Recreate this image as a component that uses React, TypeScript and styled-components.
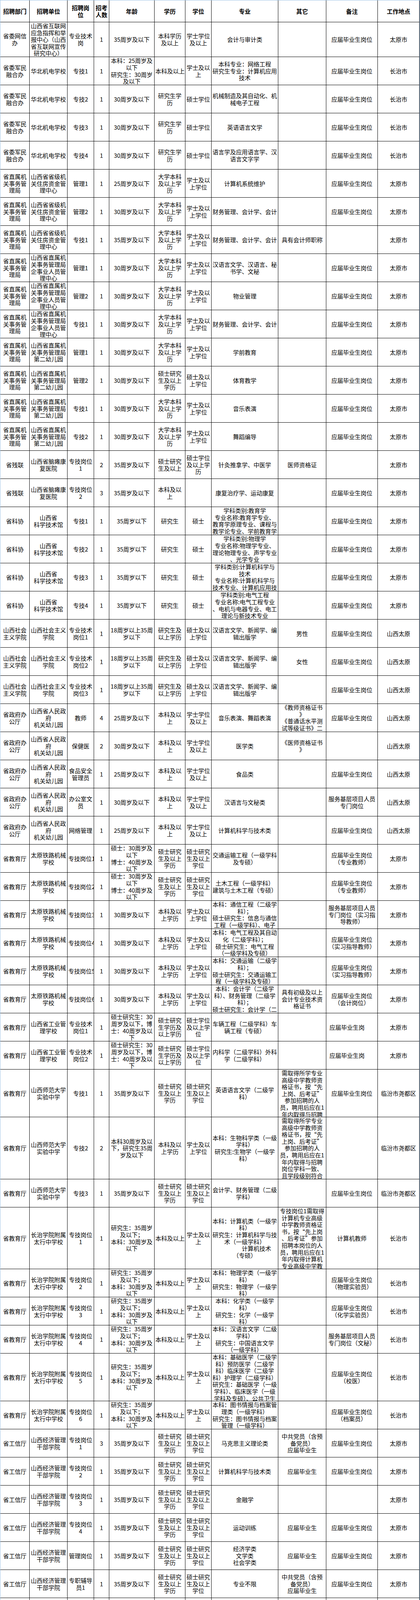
import React from 'react';
import styled, { createGlobalStyle } from 'styled-components';

const GlobalStyle = createGlobalStyle`
  html, body {
    margin: 0;
    padding: 0;
    background: #ffffff;
  }
  body {
    font-family: "Noto Sans CJK SC", sans-serif;
    color: #000000;
  }
`;

const columns = [75, 97, 68, 39, 116, 79, 67, 171, 123, 132, 107];

const Sheet = styled.div`
  width: 1076px;
  box-sizing: border-box;
  border-left: 1px solid #9dc3e6;
  border-right: 1px solid #9dc3e6;
  border-top: 1px solid #9dc3e6;
`;

const Row = styled.div<{ $height: number }>`
  display: flex;
  height: ${(p) => p.$height}px;
  overflow: hidden;
`;

const Cell = styled.div<{ $width: number; $bold?: boolean; $align?: 'left' | 'center' }>`
  flex: 0 0 ${(p) => p.$width}px;
  width: ${(p) => p.$width}px;
  height: 100%;
  display: flex;
  flex-direction: column;
  box-sizing: border-box;
  overflow: hidden;
  padding: 0 2px 0 ${(p) => (p.$align === 'left' ? '8px' : '2px')};
  border-right: 1px solid #000000;
  border-bottom: 1px solid #000000;
  font-size: 15px;
  line-height: 17.6px;
  font-weight: ${(p) => (p.$bold ? 700 : 400)};
  text-align: ${(p) => p.$align || 'center'};
`;

const CellText = styled.div`
  flex: none;
  margin: auto 0;
  white-space: pre;
`;

type CellData = string | { text: string; align: 'left' | 'center' };
type RowData = { h: number; cells: CellData[] };

const r = (h: number, ...cells: CellData[]): RowData => ({ h, cells });

const YJ = '应届毕业生岗位';
const SWJM = '省委军民\n融合办';
const HB = '华北机电学校';
const ZSJ = '省直属机\n关事务管\n理局';
const ZF = '山西省省级机\n关住房资金管\n理中心';
const QSY = '山西省直属机\n关事务管理局\n企事业人员管\n理中心';
const YEY = '山西省直属机\n关事务管理局\n第二幼儿园';
const DXBK = '大学本科\n及以上学\n历';
const XSJS = '学士及以\n上学位';
const KXG = '山西省\n科学技术馆';
const SHZY = '山西社会\n主义学院';
const SHZYY = '山西社会主义\n学院';
const ZFB = '省政府办\n公厅';
const JGY = '山西省人民政\n府\n机关幼儿园';
const BKYS = '本科及以\n上';
const XSXW = '学士学位\n及以上';
const JYT = '省教育厅';
const TL = '太原铁路机械\n学校';
const SSYS = '硕士研究\n生及以上\n学历';
const SSXW = '硕士研究\n生及以上\n学位';
const SSNL = '硕士：30周岁及\n以下\n博士：40周岁及\n以下';
const BKXL = '本科及以\n上学历';
const SXJY = '山西师范大学\n实验中学';
const SXJYNOTE =
  '需取得所学专业\n高级中学教师资\n格证书，按“先\n上岗、后考证”\n参加招聘的人\n员，聘用后应在1\n年内取得与招聘\n岗位学科一致、\n且学段级别符合\n的教师资格证书';
const CZ = '长治学院附属\n太行中学校';
const CZNL = '研究生：35周岁\n及以下；\n本科：30周岁及\n以下';
const GXT = '省工信厅';
const JJGL = '山西经济管理\n干部学院';
const GYXX = '山西省工业与\n信息技术学校';
const DY = '中共党员（含预\n备党员）';

const header = r(
  56,
  '招聘部门',
  '招聘单位',
  '招聘岗\n位',
  '招考\n人数',
  '年龄',
  '学历',
  '学位',
  '专业',
  '其它',
  '备注',
  '工作地点'
);

const rows: RowData[] = [
  r(89, '省委网信\n办', '山西省互联网\n应急指挥和举\n报中心（山西\n省互联网宣传\n研究中心）', '专业技术\n岗', '1', '35周岁及以下', '本科学历\n及以上', '学士学位\n及以上', '会计与审计类', '', YJ, '太原市'),
  r(72, SWJM, HB, '专技1', '1', '本科：25周岁及\n以下\n研究生：30周岁\n及以下', '本科及以上', '学士及以\n上', '本科专业：网络工程\n研究生专业：计算机应用\n技术', '', YJ, '长治市'),
  r(72, SWJM, HB, '专技2', '1', '30周岁及以下', '研究生学\n历', '硕士学位', '机械制造及其自动化、机\n械电子工程', '', YJ, '长治市'),
  r(72, SWJM, HB, '专技3', '1', '30周岁及以下', '研究生学\n历', '硕士学位', '英语语言文学', '', YJ, '长治市'),
  r(72, SWJM, HB, '专技4', '1', '30周岁及以下', '研究生学\n历', '硕士学位', '语言学及应用语言学、汉\n语言文字学', '', YJ, '长治市'),
  r(72, ZSJ, ZF, '管理1', '1', '25周岁及以下', DXBK, XSJS, '计算机系统维护', '', YJ, '太原市'),
  r(72, ZSJ, ZF, '管理2', '1', '30周岁及以下', DXBK, XSJS, '财务管理、会计学、会计', '', YJ, '太原市'),
  r(72, ZSJ, ZF, '专技1', '1', '35周岁及以下', DXBK, XSJS, '财务管理、会计学、会计', '具有会计师职称', '', '太原市'),
  r(72, ZSJ, QSY, '管理1', '1', '30周岁及以下', DXBK, XSJS, '汉语言文学、汉语言、秘\n书学、文秘', '', YJ, '太原市'),
  r(72, ZSJ, QSY, '管理2', '1', '30周岁及以下', DXBK, XSJS, '物业管理', '', YJ, '太原市'),
  r(72, ZSJ, QSY, '专技1', '1', '30周岁及以下', DXBK, XSJS, '财务管理、会计学、会计', '', YJ, '太原市'),
  r(72, ZSJ, YEY, '管理1', '1', '30周岁及以下', DXBK, XSJS, '学前教育', '', YJ, '太原市'),
  r(72, ZSJ, YEY, '管理2', '1', '30周岁及以下', '硕士研究\n生及以上\n学历', '硕士及以\n上学位', '体育教学', '', YJ, '太原市'),
  r(72, ZSJ, YEY, '专技1', '1', '30周岁及以下', DXBK, XSJS, '音乐表演', '', YJ, '太原市'),
  r(72, ZSJ, YEY, '专技2', '1', '30周岁及以下', DXBK, XSJS, '舞蹈编导', '', YJ, '太原市'),
  r(72, '省残联', '山西省脑瘫康\n复医院', '专技岗位\n1', '2', '35周岁及以下', '硕士研究\n生及以上', '硕士学位\n及以上学\n历', '针灸推拿学、中医学', '医师资格证', '', '太原市'),
  r(72, '省残联', '山西省脑瘫康\n复医院', '专技岗位\n2', '3', '35周岁及以下', BKYS, '', '康复治疗学、运动康复', '', YJ, '太原市'),
  r(72, '省科协', KXG, '专技1', '1', '35周岁以下', '研究生', '硕士', '学科类别:教育学\n专业名称:教育学专业、\n教育学原理专业、课程与\n教学论专业、学前教育学\n专业', '', YJ, '太原市'),
  r(72, '省科协', KXG, '专技2', '1', '35周岁以下', '研究生', '硕士', '学科类别:物理学\n专业名称:物理学专业、\n理论物理专业、声学专业\n、光学专业', '', YJ, '太原市'),
  r(72, '省科协', KXG, '专技3', '1', '35周岁以下', '研究生', '硕士', '学科类别:计算机科学与\n技术\n专业名称:计算机科学与\n技术专业、计算机应用技\n术专业', '', YJ, '太原市'),
  r(72, '省科协', KXG, '专技4', '1', '35周岁以下', '研究生', '硕士', '学科类别:电气工程\n专业名称:电气工程专业\n、电机与电器专业、电工\n理论与新技术专业', '', YJ, '太原市'),
  r(72, SHZY, SHZYY, '专业技术\n岗位1', '1', '18周岁以上35周\n岁以下', '研究生及\n以上学历', '硕士及以\n上学位', '汉语言文学、新闻学、编\n辑出版学', '男性', YJ, '山西太原'),
  r(72, SHZY, SHZYY, '专业技术\n岗位2', '1', '18周岁以上35周\n岁以下', '研究生及\n以上学历', '硕士及以\n上学位', '汉语言文学、新闻学、编\n辑出版学', '女性', YJ, '山西太原'),
  r(72, SHZY, SHZYY, '专业技术\n岗位3', '1', '18周岁以上35周\n岁以下', '研究生及\n以上学历', '硕士及以\n上学位', '汉语言文学、新闻学、编\n辑出版学', '', YJ, '山西太原'),
  r(72, ZFB, JGY, '教师', '4', '25周岁及以下', BKYS, XSXW, '音乐表演、舞蹈表演', '《教师资格证书\n》\n《普通话水平测\n试等级证书》二\n级乙等及以上', YJ, '山西太原'),
  r(72, ZFB, JGY, '保健医', '2', '30周岁及以下', BKYS, XSXW, '医学类', '《医师资格证书\n》', '', '山西太原'),
  r(72, ZFB, JGY, '食品安全\n管理员', '1', '25周岁及以下', BKYS, XSXW, '食品类', '', YJ, '山西太原'),
  r(72, ZFB, JGY, '办公室文\n员', '1', '30周岁及以下', BKYS, XSXW, '汉语言与文秘类', '', '服务基层项目人员\n专门岗位', '山西太原'),
  r(72, ZFB, JGY, '网络管理', '1', '25周岁及以下', BKYS, XSXW, '计算机科学与技术类', '', YJ, '山西太原'),
  r(72, JYT, TL, '专技岗位1', '1', SSNL, SSYS, SSXW, '交通运输工程（一级学科\n及专硕）', '', '应届毕业生岗位\n（专业教师）', '太原市'),
  r(72, JYT, TL, '专技岗位2', '1', SSNL, SSYS, SSXW, '土木工程（一级学科）\n建筑与土木工程（专硕）', '', '应届毕业生岗位\n（专业教师）', '太原市'),
  r(72, JYT, TL, '专技岗位3', '1', '30周岁及以下', BKXL, XSJS, '本科：通信工程（二级学\n科）；\n硕士研究生：信息与通信\n工程（一级学科）、电子\n科学与技术（一级学科）', '', '服务基层项目人员\n专门岗位（实习指\n导教师）', '太原市'),
  r(72, JYT, TL, '专技岗位4', '1', '30周岁及以下', BKXL, XSJS, '本科：电气工程及其自动\n化（二级学科）；\n硕士研究生：电气工程\n（一级学科及专硕）', '', '应届毕业生岗位\n（实习指导教师）', '太原市'),
  r(72, JYT, TL, '专技岗位5', '1', '30周岁及以下', BKXL, XSJS, '本科：交通运输（二级学\n科）；\n硕士研究生：交通运输工\n程（一级学科及专硕）', '', '应届毕业生岗位\n（实习指导教师）', '太原市'),
  r(72, JYT, TL, '专技岗位6', '1', '30周岁及以下', BKXL, XSJS, '本科：会计学（二级学\n科）、财务管理（二级学\n科）；\n硕士研究生：会计学（二\n级学科）', '具有初级及以上\n会计专业技术资\n格证书', '应届毕业生岗位\n（会计岗位）', '太原市'),
  r(72, JYT, '山西省工业管\n理学校', '专业技术\n岗位1', '1', '硕士研究生：30\n周岁及以下，博\n士：40周岁及以\n下', '硕士研究\n生学历及\n以上学历', '硕士学位\n及以上学\n位', '车辆工程（二级学科）车\n辆工程（专硕）', '', { text: '应届毕业生岗', align: 'left' }, '太原市'),
  r(72, JYT, '山西省工业管\n理学校', '专业技术\n岗位2', '1', '硕士研究生：30\n周岁及以下，博\n士：40周岁及以\n下', '硕士研究\n生学历及\n以上学历', '硕士学位\n及以上学\n位', '内科学（二级学科）外科\n学（二级学科）', '', { text: '应届毕业生岗', align: 'left' }, '太原市'),
  r(122, JYT, SXJY, '专技1', '1', '35周岁及以下', SSYS, SSXW, '英语语言文学（二级学\n科）', SXJYNOTE, YJ, '临汾市尧都区'),
  r(159, JYT, SXJY, '专技2', '2', '本科30周岁及以\n下，研究生35周\n岁及以下', BKXL, XSJS, '本科：生物科学类（一级\n学科）\n研究生:生物学（一级学\n科）', SXJYNOTE, '', '临汾市尧都区'),
  r(72, JYT, SXJY, '专技3', '1', '35周岁及以下', SSYS, SSXW, '会计学、财务管理（二级\n学科）', '', YJ, '临汾市尧都区'),
  r(158, JYT, CZ, '专技岗位\n1', '1', CZNL, '本科及以上', '学士及以\n上', '本科：计算机类（一级学\n科）\n研究生：计算机科学与技\n术（一级学科）\n　　　　计算机技术\n（专硕）', '专技岗位1需取得\n计算机专业高级\n中学教师资格证\n书，按“先上岗\n、后考证”参加\n招聘本岗位的人\n员，聘用后应在1\n年内取得计算机\n专业高级中学教\n师资格证书', '计算机教师', '长治市'),
  r(72, JYT, CZ, '专技岗位\n2', '1', CZNL, '本科及以上', '学士及以\n上', '本科：物理学类（一级学\n科）\n研究生：物理学（一级学\n科）', '', '应届毕业生岗位\n（物理实验员）', '长治市'),
  r(72, JYT, CZ, '专技岗位\n3', '1', CZNL, '本科及以上', '学士及以\n上', '本科：化学类（一级学\n科）\n研究生：化学（一级学\n科）', '', '应届毕业生岗位\n（化学实验员）', '长治市'),
  r(72, JYT, CZ, '专技岗位\n4', '1', CZNL, '本科及以上', '学士及以\n上', '本科：汉语言文学（二级\n学科）\n研究生：中国语言文学\n（一级学科）', '', '服务基层项目人员\n专门岗位（文秘）', '长治市'),
  r(122, JYT, CZ, '专技岗位\n5', '1', CZNL, '本科及以上', '学士及以\n上', '本科：基础医学（二级学\n科）预防医学（二级学\n科）临床医学（二级学\n科）护理学（二级学科）\n研究生：基础医学（一级\n学科）、临床医学（一级\n学科及专硕）、公共卫生\n（专硕）', '', '应届毕业生岗位\n（校医）', '长治市'),
  r(72, JYT, CZ, '专技岗位\n6', '1', CZNL, '本科及以上', '学士及以\n上', '本科：图书情报与档案管\n理类（一级学科）\n研究生：图书情报与档案\n管理（一级学科）', '', '应届毕业生岗位\n（档案员）', '长治市'),
  r(72, GXT, JJGL, '专技岗位\n1', '3', '35周岁及以下', SSYS, SSXW, '马克思主义理论类', `${DY}\n应届毕业生`, YJ, '太原市'),
  r(72, GXT, JJGL, '专技岗位\n2', '1', '35周岁及以下', SSYS, SSXW, '计算机科学与技术类', '应届毕业生', YJ, '太原市'),
  r(72, GXT, JJGL, '专技岗位\n3', '1', '35周岁及以下', SSYS, SSXW, '金融学', '', '', '太原市'),
  r(72, GXT, JJGL, '专技岗位\n4', '1', '35周岁及以下', SSYS, SSXW, '运动训练', '应届毕业生', YJ, '太原市'),
  r(72, GXT, JJGL, '管理岗位', '1', '35周岁及以下', SSYS, SSXW, '经济学类\n文学类\n社会学类', '应届毕业生', YJ, '太原市'),
  r(72, GXT, JJGL, '专职辅导\n员1', '1', '35周岁及以下', SSYS, SSXW, '专业不限', `${DY}\n应届毕业生`, YJ, '太原市'),
  r(72, GXT, JJGL, '专职辅导\n员2', '1', '35周岁及以下', SSYS, SSXW, '专业不限', DY, '', '太原市'),
  r(72, GXT, GYXX, '管理岗位\n1', '1', '35周岁及以下', DXBK, XSXW, '行政管理、社会工作', '应届毕业生', YJ, '晋中市'),
  r(72, GXT, GYXX, '管理岗位\n2', '1', '35周岁及以下', DXBK, XSXW, '音乐表演', '应届毕业生', YJ, '晋中市'),
  r(72, GXT, GYXX, '管理岗位\n3', '1', '35周岁及以下', DXBK, XSXW, '本科：汉语言文学、汉语\n言、应用语言学\n研究生：语言学及应用语\n言学、汉语言文字学', '', '服务基层项目人员\n专门岗位', '晋中市'),
  r(72, GXT, GYXX, '专技岗位', '1', '35周岁及以下', DXBK, XSXW, '电气工程及其自动化', '', '', '晋中市'),
  r(72, '省公安厅', '山西警察学院', '教师岗位\n1', '3', '35周岁及以下', SSYS, '硕士及以\n上学位', '计算机/数学/电子信息', '', '应届毕业生', '太原市清徐县'),
];

function TableRow({ row, bold }: { row: RowData; bold?: boolean }): JSX.Element {
  return (
    <Row $height={row.h}>
      {row.cells.map((cell, i) => {
        const text = typeof cell === 'string' ? cell : cell.text;
        const align = typeof cell === 'string' ? 'center' : cell.align;
        return (
          <Cell key={i} $width={columns[i]} $bold={bold} $align={align}>
            <CellText>{text}</CellText>
          </Cell>
        );
      })}
    </Row>
  );
}

export default function App(): JSX.Element {
  return (
    <>
      <GlobalStyle />
      <Sheet>
        <TableRow row={header} bold />
        {rows.map((row, i) => (
          <TableRow key={i} row={row} />
        ))}
      </Sheet>
    </>
  );
}
